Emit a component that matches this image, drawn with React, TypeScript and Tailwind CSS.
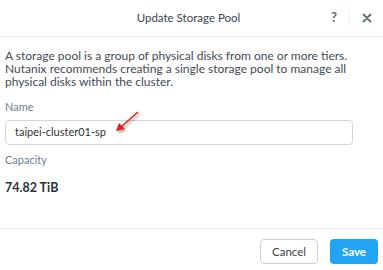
import React from "react";

export default function App() {
  return (
    <div
      className="w-[383px] h-[270px] bg-white flex flex-col text-[#3d4551]"
      style={{ fontFamily: "Lato, 'Open Sans', sans-serif" }}
    >
      <div className="h-[37px] shrink-0 border-b border-[#eef0f2] grid grid-cols-[56px_1fr_56px] items-center">
        <div />
        <div className="text-center text-[11.5px] text-[#3c4450] pr-[6px]">Update Storage Pool</div>
        <div className="flex items-center h-full">
          <span className="w-[14px] text-center text-[13px] font-bold text-[#5e6b7c]">?</span>
          <span className="ml-[8px] w-px h-[17px] bg-[#eef0f2]" />
          <span className="flex-1 flex justify-center">
            <svg width="10" height="10" viewBox="0 0 10 10">
              <path d="M1.5 1.5 L8.5 8.5 M8.5 1.5 L1.5 8.5" stroke="#5e6b7c" strokeWidth="1.8" strokeLinecap="round" />
            </svg>
          </span>
        </div>
      </div>
      <div className="flex-1 px-[5px] pt-[12px]">
        <p className="text-[12px] leading-[13px] text-[#444b55] whitespace-nowrap">
          A storage pool is a group of physical disks from one or more tiers.
          <br />
          Nutanix recommends creating a single storage pool to manage all
          <br />
          physical disks within the cluster.
        </p>
        <div className="mt-[11px] text-[11px] text-[#6f7d8f]">Name</div>
        <div className="relative mt-[4px] w-[348px] h-[25px] border border-[#cfd5dc] rounded-[4px] flex items-center pl-[9px] text-[11px] text-[#333]">
          taipei-cluster01-sp
          <svg className="absolute left-[100px] top-[-12px]" width="40" height="30" viewBox="0 0 40 30">
            <defs>
              <filter id="sh" x="-50%" y="-50%" width="200%" height="200%">
                <feDropShadow dx="1.5" dy="2" stdDeviation="1.2" floodColor="#000" floodOpacity="0.35" />
              </filter>
            </defs>
            <g filter="url(#sh)">
              <line x1="32" y1="3" x2="15" y2="18" stroke="#e02020" strokeWidth="1.6" />
              <polygon points="10,22 13,14 19,20" fill="#e02020" />
            </g>
          </svg>
        </div>
        <div className="mt-[7px] text-[11px] text-[#6f7d8f]">Capacity</div>
        <div className="mt-[11px] text-[12.5px] font-bold text-[#2e333a]">74.82 TiB</div>
      </div>
      <div className="h-[42px] shrink-0 border-t border-[#eef0f2] flex items-start justify-end gap-[12px] pr-[5px] pt-[10px]">
        <button className="w-[58px] h-[25px] rounded-[4px] border border-[#c9d0d8] bg-white text-[11.5px] text-[#3c4450]">Cancel</button>
        <button className="w-[48px] h-[25px] rounded-[4px] bg-[#22a4f5] text-[11.5px] font-bold text-white">Save</button>
      </div>
    </div>
  );
}
